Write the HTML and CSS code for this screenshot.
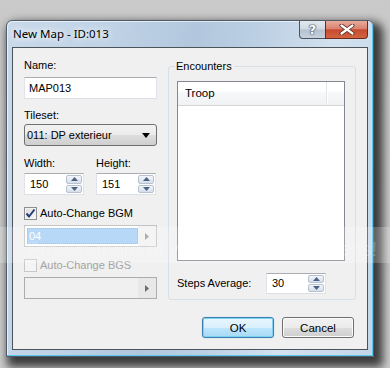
FILE: index.html
```html
<!DOCTYPE html>
<html lang="en">
<head>
  <meta charset="UTF-8">
  <meta name="viewport" content="width=device-width, initial-scale=1.0">
  <title>New Map - ID:013</title>
  <link rel="stylesheet" href="styles.css">
</head>
<body>
  <div class="window">
    <div class="titlebar">
      <span class="title">New Map - ID:013</span>
      <div class="caption-buttons">
        <button class="cap cap-help" aria-label="Help">?</button>
        <button class="cap cap-close" aria-label="Close">
          <svg width="16" height="11" viewBox="0 0 16 11">
            <path d="M2.5 1.5l11 8m0-8l-11 8" stroke="#5a2a22" stroke-width="4" stroke-linecap="round"/>
            <path d="M2.5 1.5l11 8m0-8l-11 8" stroke="#fff" stroke-width="2.2" stroke-linecap="round"/>
          </svg>
        </button>
      </div>
    </div>

    <div class="client">
      <div class="main">
        <div class="left">
          <div class="lbl">Name:</div>
          <div class="textbox name">MAP013</div>

          <div class="lbl lbl-tileset">Tileset:</div>
          <div class="combo">
            <span>011: DP exterieur</span>
            <svg width="8" height="5" viewBox="0 0 8 5"><path d="M0 0h8L4 5z" fill="#000"/></svg>
          </div>

          <div class="size-labels"><span>Width:</span><span>Height:</span></div>
          <div class="size-row">
            <div class="textbox spin">
              <span class="spin-value">150</span>
              <span class="spin-btns">
                <span class="spin-btn"><svg width="7" height="4" viewBox="0 0 7 4"><path d="M0 4h7L3.5 0z" fill="#4d6185"/></svg></span>
                <span class="spin-btn"><svg width="7" height="4" viewBox="0 0 7 4"><path d="M0 0h7L3.5 4z" fill="#4d6185"/></svg></span>
              </span>
            </div>
            <div class="textbox spin">
              <span class="spin-value">151</span>
              <span class="spin-btns">
                <span class="spin-btn"><svg width="7" height="4" viewBox="0 0 7 4"><path d="M0 4h7L3.5 0z" fill="#4d6185"/></svg></span>
                <span class="spin-btn"><svg width="7" height="4" viewBox="0 0 7 4"><path d="M0 0h7L3.5 4z" fill="#4d6185"/></svg></span>
              </span>
            </div>
          </div>

          <div class="check">
            <span class="box">
              <svg width="11" height="11" viewBox="0 0 11 11"><path d="M1.5 5.5l2.5 3L9.5 1.5" fill="none" stroke="#253c74" stroke-width="2"/></svg>
            </span>
            Auto-Change BGM
          </div>
          <div class="picker">
            <span class="picker-sel">04</span>
            <span class="picker-btn"><svg width="4" height="7" viewBox="0 0 4 7"><path d="M0 0v7l4-3.5z" fill="#9a9a9a"/></svg></span>
          </div>

          <div class="check check-off">
            <span class="box"></span>
            Auto-Change BGS
          </div>
          <div class="picker picker-off">
            <span class="picker-sel"></span>
            <span class="picker-btn"><svg width="4" height="7" viewBox="0 0 4 7"><path d="M0 0v7l4-3.5z" fill="#6d6d6d"/></svg></span>
          </div>
        </div>

        <fieldset class="group">
          <legend>Encounters</legend>
          <div class="list">
            <div class="list-head">
              <span class="col">Troop</span>
              <span class="col-rest"></span>
            </div>
          </div>
          <div class="steps">
            <span class="steps-label">Steps Average:</span>
            <div class="textbox spin spin-steps">
              <span class="spin-value">30</span>
              <span class="spin-btns">
                <span class="spin-btn"><svg width="7" height="4" viewBox="0 0 7 4"><path d="M0 4h7L3.5 0z" fill="#4d6185"/></svg></span>
                <span class="spin-btn"><svg width="7" height="4" viewBox="0 0 7 4"><path d="M0 0h7L3.5 4z" fill="#4d6185"/></svg></span>
              </span>
            </div>
          </div>
        </fieldset>
      </div>

      <div class="actions">
        <button class="btn btn-default">OK</button>
        <button class="btn">Cancel</button>
      </div>
    </div>
  </div>

  <div class="watermark">Protect more of your memories for less!</div>
</body>
</html>
```

FILE: styles.css
```css
* {
  margin: 0;
  padding: 0;
  box-sizing: border-box;
}

body {
  width: 390px;
  height: 368px;
  overflow: hidden;
  position: relative;
  background: linear-gradient(180deg, #c9c9c9 0%, #cfcfcf 100%);
  font-family: 'Liberation Sans', Arial, sans-serif;
  font-size: 11px;
  line-height: 13px;
  color: #000;
}

/* Window frame */
.window {
  width: 368px;
  height: 337px;
  margin: 20px 0 0 6px;
  border: 1px solid #4f5b68;
  border-radius: 6px 6px 0 0;
  background: linear-gradient(100deg,
    #c9d9ea 0%, #bfd2e6 25%, #b2c7dd 45%, #bcd0e4 60%, #d3e1ef 78%, #c3d5e8 100%);
  box-shadow:
    inset -1px -1px 0 #58c8ec,
    inset 1px 1px 0 rgba(255, 255, 255, 0.6),
    5px 6px 10px 4px rgba(0, 0, 0, 0.72);
  display: flex;
  flex-direction: column;
}

.titlebar {
  height: 26px;
  display: flex;
  align-items: flex-start;
  padding-left: 6px;
}

.title {
  font-family: 'Noto Sans', sans-serif;
  font-size: 11.5px;
  line-height: 16px;
  margin-top: 5px;
  text-shadow: 0 0 6px #fff, 0 0 10px #fff;
}

.caption-buttons {
  margin-left: auto;
  margin-right: 5px;
  display: flex;
}

.cap {
  height: 18px;
  border: 1px solid #4a5563;
  border-top: none;
  cursor: pointer;
  display: grid;
  place-items: center;
}

.cap-help {
  width: 26px;
  border-radius: 0 0 0 4px;
  border-right: none;
  background: linear-gradient(180deg, #e2e8ef 0%, #cfd8e2 48%, #b5c1cf 52%, #c8d2de 100%);
  font-family: 'DejaVu Sans', sans-serif;
  font-weight: bold;
  font-size: 13px;
  color: #fff;
  text-shadow: 0 0 1px #3a4450, 0 0 1px #3a4450, 0 0 2px #3a4450;
}

.cap-close {
  width: 43px;
  border-radius: 0 0 4px 0;
  border-color: #6a2a20;
  background: linear-gradient(180deg, #e9ab9b 0%, #d98370 45%, #c74a30 52%, #d2653f 100%);
}

/* Client area */
.client {
  flex: 1;
  margin: 0 5px 6px 5px;
  border: 1px solid #4d535a;
  background: #f0f0f0;
  display: flex;
  flex-direction: column;
}

.main {
  display: flex;
  align-items: flex-start;
  gap: 11px;
  padding: 11px 11px 0 11px;
}

.left {
  width: 133px;
  display: flex;
  flex-direction: column;
}

.lbl-tileset {
  margin-top: 10px;
}

.textbox {
  height: 22px;
  background: #fff;
  border: 1px solid #dbdfe6;
  border-top-color: #abadb3;
  border-left-color: #e2e3ea;
  border-right-color: #e2e3ea;
  display: flex;
  align-items: center;
}

.name {
  margin-top: 5px;
  padding-left: 4px;
}

.combo {
  margin-top: 2px;
  height: 22px;
  border: 1px solid #707070;
  border-radius: 3px;
  background: linear-gradient(180deg, #f2f2f2 0%, #ebebeb 50%, #dddddd 51%, #cfcfcf 100%);
  display: flex;
  align-items: center;
  justify-content: space-between;
  padding: 0 6px 0 2px;
}

.size-labels {
  margin-top: 11px;
  display: grid;
  grid-template-columns: 60px 60px;
  gap: 12px;
}

.size-row {
  margin-top: 3px;
  display: grid;
  grid-template-columns: 60px 60px;
  gap: 12px;
}

.spin {
  justify-content: space-between;
  padding: 1px 1px 1px 5px;
}

.spin-btns {
  width: 16px;
  height: 100%;
  display: flex;
  flex-direction: column;
  gap: 1px;
}

.spin-btn {
  flex: 1;
  border: 1px solid #b6c2d0;
  border-radius: 2px;
  background: linear-gradient(180deg, #f3f6fa 0%, #e4eaf1 50%, #d6dfea 100%);
  display: grid;
  place-items: center;
}

.check {
  margin-top: 12px;
  display: flex;
  align-items: center;
  gap: 3px;
}

.box {
  width: 13px;
  height: 13px;
  border: 1px solid #8e8f8f;
  background: linear-gradient(135deg, #dcdcdc 0%, #f8f8f8 100%);
  box-shadow: inset 0 0 0 1px #f4f4f4;
  display: grid;
  place-items: center;
}

.check-off {
  color: #a3a3a3;
}

.check-off .box {
  border-color: #c8c8c8;
  background: #f4f4f4;
}

.picker {
  margin-top: 5px;
  height: 22px;
  border: 1px solid #c3c3c3;
  background: #fff;
  display: flex;
  padding: 2px 0 2px 2px;
}

.picker-sel {
  flex: 1;
  background: #a7cff7;
  border: 1px dotted #e3a24e;
  color: #fff;
  padding-left: 1px;
  line-height: 14px;
}

.picker-btn {
  width: 18px;
  display: grid;
  place-items: center;
  background: #f2f2f2;
  margin: -2px 0;
}

.picker-off {
  background: #f0f0f0;
  border-color: #acacac;
}

.picker-off .picker-sel {
  background: transparent;
  border: none;
}

.picker-off .picker-btn {
  background: #e8e8e8;
}

/* Encounters group */
.group {
  width: 188px;
  margin-top: 1px;
  border: 1px solid #d5dfe5;
  border-radius: 3px;
  padding: 0 10px 5px 8px;
}

.group legend {
  margin-left: -2px;
  padding: 0 2px 0 1px;
}

.list {
  margin-top: 8px;
  height: 180px;
  border: 1px solid #828790;
  background: #fff;
}

.list-head {
  height: 24px;
  display: flex;
  border-bottom: 1px solid #d5d5d5;
  background: linear-gradient(180deg, #ffffff 0%, #ffffff 40%, #f7f8f9 45%, #f1f2f4 100%);
}

.col {
  width: 149px;
  padding-left: 7px;
  display: flex;
  align-items: center;
  font-size: 11.5px;
  border-right: 1px solid #e3e4e6;
  box-shadow: 1px 0 0 #fff;
}

.steps {
  margin-top: 12px;
  display: flex;
  align-items: center;
}

.steps-label {
  width: 89px;
}

.spin-steps {
  width: 60px;
  height: 21px;
}

/* Dialog buttons */
.actions {
  margin-top: 17px;
  padding-right: 13px;
  display: flex;
  justify-content: flex-end;
  gap: 8px;
}

.btn {
  width: 72px;
  height: 21px;
  border: 1px solid #707070;
  border-radius: 3px;
  background: linear-gradient(180deg, #f2f2f2 0%, #ebebeb 50%, #dddddd 51%, #cfcfcf 100%);
  box-shadow: inset 0 0 0 1px #fbfbfb;
  font-family: inherit;
  font-size: 11.5px;
  color: #000;
  cursor: pointer;
}

.btn-default {
  border-color: #3c7fb1;
  background: linear-gradient(180deg, #eaf6fd 0%, #d9f0fc 50%, #bee6fd 51%, #a7d9f5 100%);
  box-shadow: inset 0 0 0 1px #7ed2f0, 0 0 1px #5ab4e0;
}

/* Image host watermark band */
.watermark {
  position: absolute;
  left: 0;
  top: 227px;
  width: 390px;
  height: 36px;
  background: rgba(255, 255, 255, 0.2);
  color: rgba(255, 255, 255, 0.22);
  font-family: 'Liberation Sans', Arial, sans-serif;
  font-size: 20px;
  line-height: 24px;
  padding: 10px 0 0 27px;
  white-space: nowrap;
  pointer-events: none;
}
```
